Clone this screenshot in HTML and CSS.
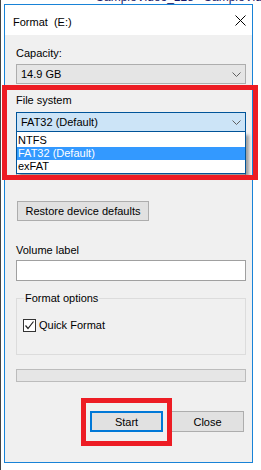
FILE: index.html
```html
<!DOCTYPE html>
<html lang="en">
<head>
  <meta charset="UTF-8" />
  <title>Format (E:)</title>
  <link rel="stylesheet" href="styles.css">
</head>
<body>

  <div class="desk">
    <!-- explorer window behind the dialog -->
    <div class="backdrop">
      <span class="file-a">SampleVideo_128</span>
      <span class="file-b">SampleVid</span>
    </div>

    <div class="window">
      <div class="titlebar">
        <span class="title">Format&nbsp; (E:)</span>
        <svg class="close-x" width="11" height="11" viewBox="0 0 11 11">
          <path d="M0.5 0.5 L10.5 10.5 M10.5 0.5 L0.5 10.5" stroke="#000" stroke-width="1" fill="none"/>
        </svg>
      </div>

      <div class="content">
        <div class="field">
          <div class="label">Capacity:</div>
          <div class="combo">
            <span>14.9 GB</span>
            <svg class="chevron" width="9" height="5" viewBox="0 0 9 5"><polyline points="0.5,0.5 4.5,4.5 8.5,0.5" fill="none" stroke="#606060"/></svg>
          </div>
        </div>

        <div class="field spaced file-system">
          <div class="label">File system</div>
          <div class="combo combo-open">
            <span>FAT32 (Default)</span>
            <svg class="chevron" width="9" height="5" viewBox="0 0 9 5"><polyline points="0.5,0.5 4.5,4.5 8.5,0.5" fill="none" stroke="#606060"/></svg>
          </div>
          <ul class="droplist">
            <li>NTFS</li>
            <li class="selected">FAT32 (Default)</li>
            <li>exFAT</li>
          </ul>
        </div>

        <!-- allocation unit size, hidden under the open list -->
        <div class="field spaced covered">
          <div class="label">Allocation unit size</div>
          <div class="combo">
            <span>16 kilobytes</span>
          </div>
        </div>

        <button class="btn restore-btn">Restore device defaults</button>

        <div class="field volume">
          <div class="label">Volume label</div>
          <div class="textbox"></div>
        </div>

        <div class="group">
          <span class="group-title">Format options</span>
          <div class="check-row">
            <span class="checkbox">
              <svg width="11" height="11" viewBox="0 0 11 11"><polyline points="1.5,5.5 4,8.5 9.5,1.5" fill="none" stroke="#222" stroke-width="1.2"/></svg>
            </span>
            <span>Quick Format</span>
          </div>
        </div>

        <div class="progress"></div>

        <div class="actions">
          <button class="btn start-btn">Start</button>
          <button class="btn">Close</button>
        </div>
      </div>
    </div>

    <!-- red annotation boxes -->
    <div class="mark mark-fs"></div>
    <div class="mark mark-start"></div>
  </div>

</body>
</html>
```

FILE: styles.css
```css
body {
  margin: 0;
  font-family: "Liberation Sans", Arial, sans-serif;
  font-size: 11px;
  color: #000;
}

.desk {
  position: relative;
  width: 261px;
  height: 470px;
  overflow: hidden;
  background: #fff;
  border-left: 1px solid #444;
  box-sizing: border-box;
}

.backdrop {
  position: absolute;
  top: -10px;
  left: 0;
  width: 100%;
  font-size: 12px;
  line-height: 14px;
  color: #1a1a6a;
}

.file-a {
  position: absolute;
  left: 95px;
}

.file-b {
  position: absolute;
  left: 203px;
}

.window {
  position: relative;
  width: 249px;
  height: 459px;
  margin: 4px 0 0 3px;
  border: 1px solid #1883d7;
  box-sizing: border-box;
  background: #f0f0f0;
  display: flex;
  flex-direction: column;
}

.titlebar {
  height: 30px;
  background: #fff;
  display: flex;
  align-items: center;
  justify-content: space-between;
  padding: 0 6px 0 8px;
}

.title {
  font-size: 11px;
  line-height: 16px;
  margin-top: 3px;
}

.close-x {
  display: block;
}

.content {
  flex: 1;
  padding: 10px 6px 0 11px;
}

.label {
  line-height: 16px;
  margin-bottom: 3px;
}

.spaced {
  margin-top: 8px;
}

.spaced .label {
  margin-bottom: 4px;
}

.file-system {
  position: relative;
  z-index: 2;
}

.covered .label,
.covered .combo span {
  visibility: hidden;
}

.combo {
  height: 20px;
  box-sizing: border-box;
  border: 1px solid #adadad;
  background: #e5e5e5;
  display: flex;
  align-items: center;
  justify-content: space-between;
  padding: 0 4px 0 4px;
  line-height: 18px;
}

.combo-open {
  background: #cce4f7;
  border-color: #005499;
}

.chevron {
  display: block;
}

.droplist {
  position: absolute;
  left: 0;
  top: 40px;
  width: 230px;
  margin: 0;
  padding: 2px 0 0;
  list-style: none;
  background: #fff;
  border: 1px solid #005499;
  border-top: none;
  box-sizing: border-box;
  box-shadow: 3px 3px 3px rgba(0, 0, 0, 0.35);
}

.droplist li {
  height: 13px;
  line-height: 13px;
  padding-left: 1px;
}

.droplist .selected {
  background: #3399ff;
  color: #fff;
}

.btn {
  font-family: "Liberation Sans", Arial, sans-serif;
  font-size: 11px;
  color: #000;
  background: #e1e1e1;
  border: 1px solid #adadad;
  border-radius: 0;
  padding: 0;
  height: 21px;
  box-sizing: border-box;
}

.restore-btn {
  display: block;
  width: 132px;
  height: 20px;
  margin: 21px 0 0 1px;
}

.volume {
  margin-top: 21px;
}

.volume .label {
  margin-bottom: 2px;
}

.textbox {
  height: 21px;
  box-sizing: border-box;
  border: 1px solid #a0a0a0;
  background: #fff;
}

.group {
  margin-top: 17px;
  height: 57px;
  box-sizing: border-box;
  border: 1px solid #dcdcdc;
  padding-left: 6px;
}

.group-title {
  display: inline-block;
  line-height: 16px;
  margin: -9px 0 0 1px;
  padding: 0 1px;
  background: #f0f0f0;
  vertical-align: top;
}

.check-row {
  display: flex;
  align-items: center;
  gap: 3px;
  margin-top: 6px;
  line-height: 16px;
}

.checkbox {
  width: 13px;
  height: 13px;
  box-sizing: border-box;
  border: 1px solid #333;
  background: #fff;
  display: flex;
  align-items: center;
  justify-content: center;
}

.checkbox svg {
  display: block;
}

.progress {
  margin-top: 14px;
  height: 13px;
  box-sizing: border-box;
  border: 1px solid #bcbcbc;
  background: #e6e6e6;
}

.actions {
  display: flex;
  justify-content: flex-end;
  gap: 8px;
  margin-top: 29px;
  padding-right: 2px;
}

.actions .btn {
  width: 73px;
}

.start-btn {
  border: 2px solid #0078d7;
}

.mark {
  position: absolute;
  border: 5px solid #ed1c24;
  box-sizing: border-box;
  z-index: 5;
}

.mark-fs {
  left: 1px;
  top: 85px;
  width: 256px;
  height: 95px;
}

.mark-start {
  left: 80px;
  top: 398px;
  width: 91px;
  height: 48px;
}
```
